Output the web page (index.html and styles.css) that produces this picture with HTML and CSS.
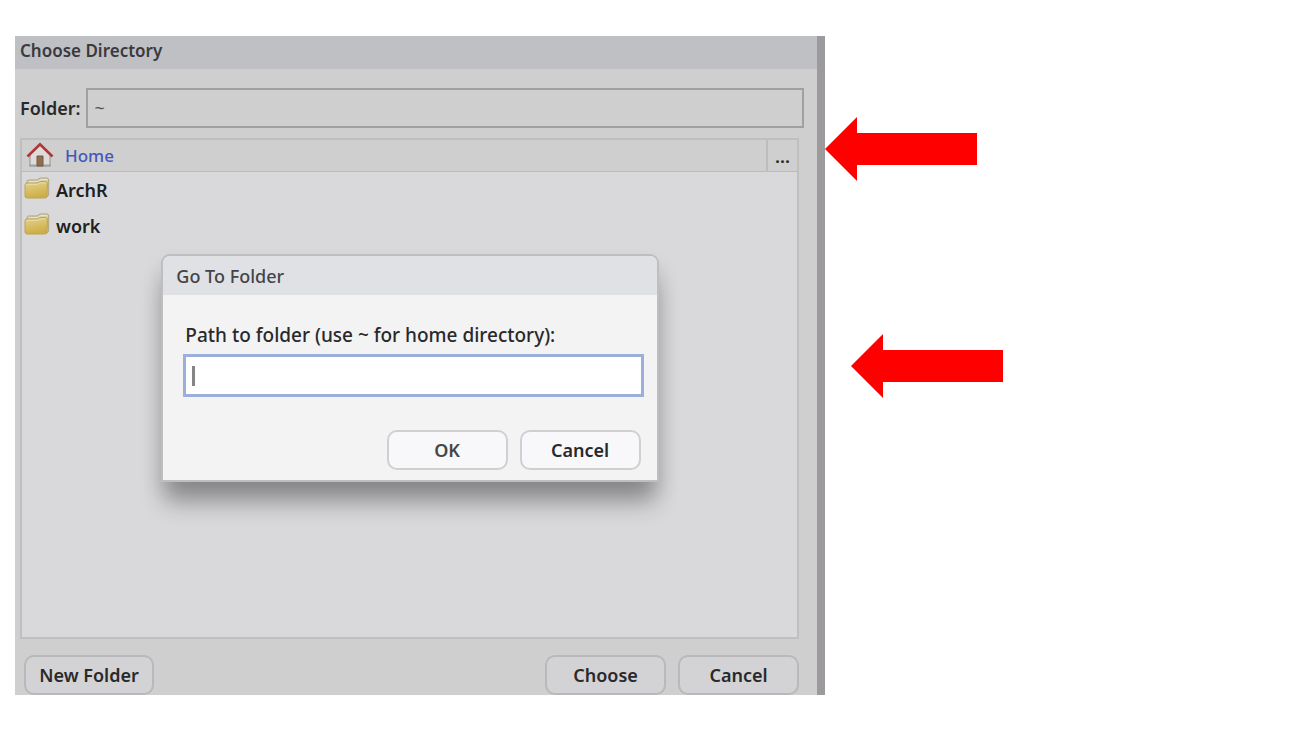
FILE: index.html
```html
<!DOCTYPE html>
<html lang="en">
<head>
<meta charset="utf-8">
<title>Choose Directory</title>
<link rel="stylesheet" href="styles.css">
</head>
<body>
<svg class="defs" aria-hidden="true">
  <defs>
    <linearGradient id="folder-front" x1="0" y1="0" x2="0.3" y2="1">
      <stop offset="0" stop-color="#e3d38c"/>
      <stop offset="1" stop-color="#cfae48"/>
    </linearGradient>
    <symbol id="folder" viewBox="0 0 26 22">
      <path d="M3 7V4.500Q3 3 4.500 3H13L16 1H23Q24.500 1 24.700 3V17Q24.500 20 22 20H4Z" fill="#d8d1ae" stroke="#aea57d"/>
      <path d="M5 4.500H14L17 2.500H23" fill="none" stroke="#e8e3cd"/>
      <path d="M1 8Q1 6 3 6H13L16 4.500H21.500Q23.500 4.500 23.500 6.500L23 19Q22.900 21 21 21H3Q1 21 1 19Z" fill="url(#folder-front)" stroke="#bba455"/>
      <path d="M2.500 8.500Q2.500 7.300 4 7.300H13.500L16.500 5.800H21.500" fill="none" stroke="#e9dfad"/>
    </symbol>
    <symbol id="home" viewBox="0 0 28 26">
      <path d="M4 12L14 3L24 12V24H4Z" fill="#dcdcda" stroke="#92928f"/>
      <path d="M3 22.500H25V24.500H3Z" fill="#a2a29f"/>
      <path d="M11 14H17V24H11Z" fill="#936c4d" stroke="#755944"/>
      <path d="M1.500 14.500L14 2.300L26.500 14.500" fill="none" stroke="#b23535" stroke-width="2.600"/>
    </symbol>
  </defs>
</svg>
<main class="page">
  <section class="window" aria-labelledby="window-title">
    <h1 class="window-title" id="window-title">Choose Directory</h1>
    <div class="folder-row">
      <label for="folder-input">Folder:</label>
      <input class="folder-input" id="folder-input" type="text" value="~">
    </div>
    <div class="browser">
      <nav class="crumbs">
        <a class="crumb" href="#"><svg class="home-icon" aria-hidden="true"><use href="#home"/></svg>Home</a>
        <button class="more" type="button" aria-label="Go to folder">...</button>
      </nav>
      <ul class="entries">
        <li><a class="entry" href="#"><svg class="folder-icon" aria-hidden="true"><use href="#folder"/></svg>ArchR</a></li>
        <li><a class="entry" href="#"><svg class="folder-icon" aria-hidden="true"><use href="#folder"/></svg>work</a></li>
      </ul>
    </div>
    <div class="footer">
      <button class="button button-wide" type="button">New Folder</button>
      <button class="button push" type="button">Choose</button>
      <button class="button" type="button">Cancel</button>
    </div>
    <div class="modal" role="dialog" aria-labelledby="modal-title">
      <h2 class="modal-title" id="modal-title">Go To Folder</h2>
      <form class="modal-body">
        <label class="path-label" for="path-input">Path to folder (use ~ for home directory):</label>
        <div class="path-field"><input class="path-input" id="path-input" type="text"></div>
        <div class="modal-actions">
          <button class="button button-light button-ok" type="button">OK</button>
          <button class="button button-light" type="button">Cancel</button>
        </div>
      </form>
    </div>
  </section>
  <aside class="arrows" aria-hidden="true">
    <svg class="arrow" viewBox="0 0 152 64"><path d="M0 32L32 0V16H152V48H32V64Z"/></svg>
    <svg class="arrow arrow-indent" viewBox="0 0 152 64"><path d="M0 32L32 0V16H152V48H32V64Z"/></svg>
  </aside>
</main>
</body>
</html>
```
FILE: styles.css
```css
* { box-sizing: border-box; }
body {
  margin: 0;
  background: #fff;
  color: #29292b;
  font: 600 18px/24px "Noto Sans", "Open Sans", sans-serif;
}
.defs { position: absolute; width: 0; height: 0; }
button, input { font: inherit; color: inherit; }
h1, h2 { margin: 0; font-size: 17px; font-weight: 600; }
.page {
  display: grid;
  grid-template-columns: 81fr 46fr;
  min-height: 100vh;
  padding: 36px 15px;
}
.window {
  position: relative;
  display: flex;
  flex-direction: column;
  background: #cfcfcf;
  border-right: 8px solid #9c9a9c;
}
.window-title {
  height: 33px;
  padding: 3px 5px;
  background: #bfc0c4;
  color: #3a3a3e;
}
.folder-row {
  display: flex;
  align-items: center;
  gap: 6px;
  margin: 19px 13px 10px 5px;
}
.folder-input {
  flex: 1;
  min-width: 0;
  height: 40px;
  padding: 0 6px;
  border: 2px solid #a0a0a2;
  background: #cfcfcf;
  color: #555;
  font-weight: 400;
}
.browser {
  flex: 1;
  margin: 0 18px 0 5px;
  border: 2px solid #c0bfc0;
  background: #d9d9db;
}
.crumbs {
  display: flex;
  height: 32px;
  background: #cfcfcf;
  border-bottom: 1px solid #bbb;
}
.crumb {
  flex: 1;
  display: flex;
  align-items: center;
  gap: 11px;
  padding: 0 4px;
  color: #4459b8;
  font-size: 17px;
  font-weight: 500;
  text-decoration: none;
}
.home-icon { width: 28px; height: 26px; margin-bottom: 2px; }
.more {
  width: 31px;
  padding: 0;
  border: 0;
  border-left: 2px solid #bebdbe;
  background: none;
}
.entries { margin: 0; padding: 0; list-style: none; }
.entry {
  display: flex;
  align-items: center;
  gap: 6px;
  height: 36px;
  padding-left: 2px;
  color: #202022;
  text-decoration: none;
}
.folder-icon { width: 26px; height: 22px; margin-bottom: 4px; }
.footer {
  display: flex;
  gap: 12px;
  margin: 16px 18px 0 9px;
}
.button {
  width: 121px;
  height: 40px;
  padding: 0;
  border: 2px solid #b9b8ba;
  border-radius: 10px;
  background: #d3d2d5;
}
.button-wide { width: 130px; }
.push { margin-left: auto; }
.modal {
  position: absolute;
  top: 218px;
  left: 18%;
  width: 62%;
  margin-left: 2px;
  border: 2px solid #bebec0;
  border-radius: 9px 9px 0 0;
  background: #f3f3f3;
  box-shadow: 0 24px 24px -4px rgba(0, 0, 0, 0.32), 0 10px 20px rgba(0, 0, 0, 0.1);
}
.modal-title {
  height: 39px;
  padding: 8px 13px;
  border-radius: 7px 7px 0 0;
  background: #e0e1e5;
  color: #454548;
  font-size: 18px;
  font-weight: 500;
}
.modal-body { padding: 28px 13px 10px 20px; }
.path-label {
  display: block;
  padding-left: 2px;
  font-size: 19px;
  font-weight: 500;
}
.path-field { position: relative; margin-top: 7px; }
.path-field::before {
  content: "";
  position: absolute;
  left: 9px;
  top: 12px;
  width: 3px;
  height: 20px;
  background: #858587;
}
.path-input {
  display: block;
  width: 100%;
  height: 43px;
  padding: 0 8px;
  border: 3px solid #9caedb;
  background: #fff;
  outline: 0;
}
.modal-actions {
  display: flex;
  justify-content: flex-end;
  gap: 12px;
  margin: 33px 3px 0 0;
}
.button-light { border-color: #d0d0d3; background: #f8f7fa; }
.button-ok { color: #464648; }
.arrows {
  display: flex;
  flex-direction: column;
  gap: 153px;
  padding-top: 81px;
}
.arrow { width: 152px; height: 64px; fill: #f00; }
.arrow-indent { margin-left: 26px; }
```
